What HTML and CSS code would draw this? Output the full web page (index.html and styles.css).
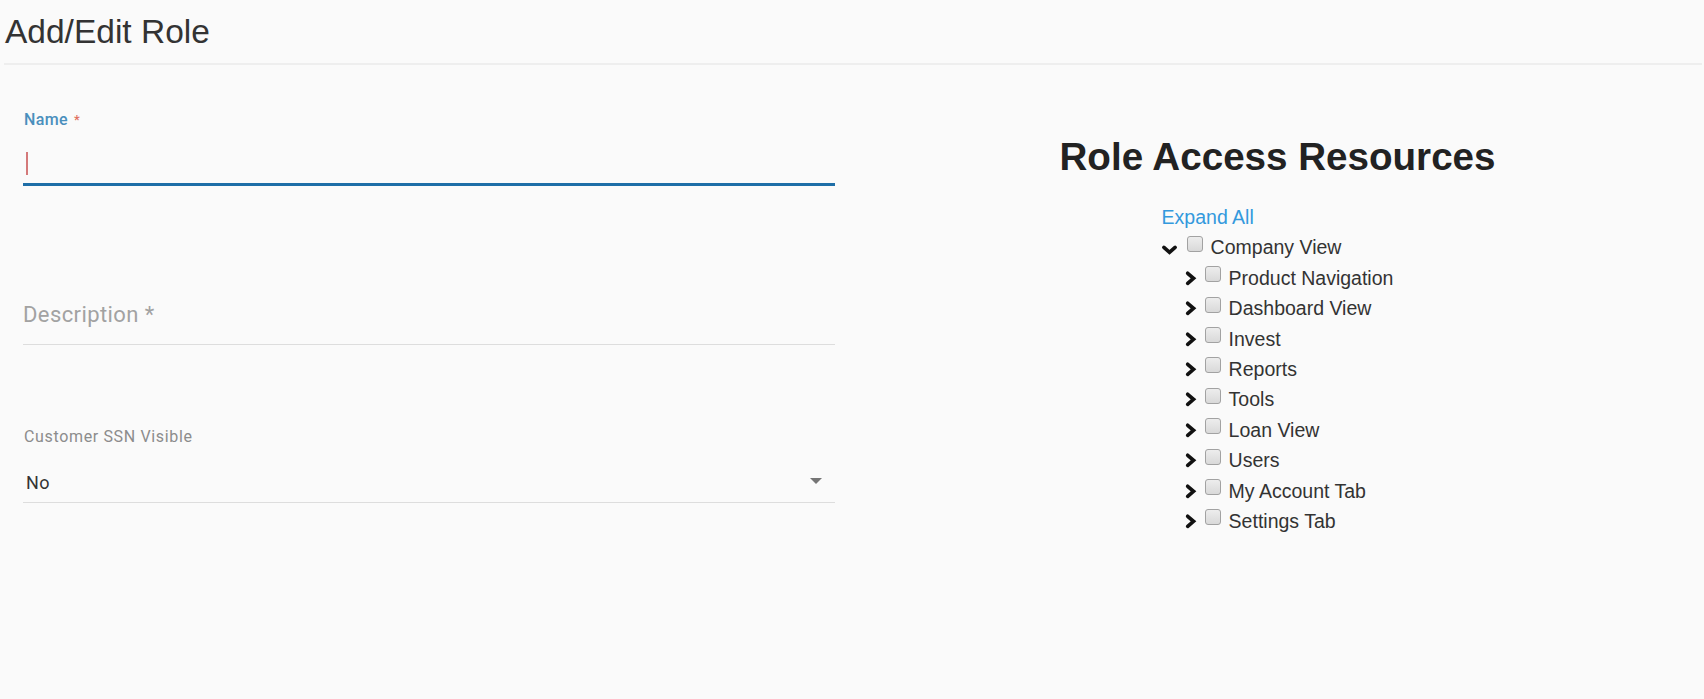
FILE: index.html
```html
<!DOCTYPE html>
<html lang="en">
<head>
<meta charset="utf-8">
<title>Add/Edit Role</title>
<link rel="stylesheet" href="styles.css">
</head>
<body>
<div class="page">
  <h1 class="title">Add/Edit Role</h1>
  <div class="content">
    <form class="form">
      <div class="field field-name">
        <label class="float-label">Name<span class="req">*</span></label>
        <div class="input input-focused"><span class="caret"></span></div>
      </div>
      <div class="field field-desc">
        <div class="input input-plain"><span class="placeholder">Description *</span></div>
      </div>
      <div class="field field-select">
        <div class="static-label">Customer SSN Visible</div>
        <div class="select"><span class="select-value">No</span><span class="select-arrow"></span></div>
      </div>
    </form>
    <section class="resources">
      <h2 class="res-title">Role Access Resources</h2>
      <div class="tree">
        <div class="row expand-row"><a class="expand-all">Expand All</a></div>
        <div class="row">
          <svg class="chev" width="25" height="30" viewBox="0 0 25 30"><path d="M1.9 15.4 L7.5 20.3 L13.1 15.4" /></svg>
          <span class="cb"></span><span class="txt">Company View</span>
        </div>
        <div class="children">
          <div class="row"><svg class="chev" width="25" height="30" viewBox="0 0 25 30"><path d="M7.7 10.3 L13.5 15.3 L7.7 20.3" /></svg><span class="cb"></span><span class="txt">Product Navigation</span></div>
          <div class="row"><svg class="chev" width="25" height="30" viewBox="0 0 25 30"><path d="M7.7 10.3 L13.5 15.3 L7.7 20.3" /></svg><span class="cb"></span><span class="txt">Dashboard View</span></div>
          <div class="row"><svg class="chev" width="25" height="30" viewBox="0 0 25 30"><path d="M7.7 10.3 L13.5 15.3 L7.7 20.3" /></svg><span class="cb"></span><span class="txt">Invest</span></div>
          <div class="row"><svg class="chev" width="25" height="30" viewBox="0 0 25 30"><path d="M7.7 10.3 L13.5 15.3 L7.7 20.3" /></svg><span class="cb"></span><span class="txt">Reports</span></div>
          <div class="row"><svg class="chev" width="25" height="30" viewBox="0 0 25 30"><path d="M7.7 10.3 L13.5 15.3 L7.7 20.3" /></svg><span class="cb"></span><span class="txt">Tools</span></div>
          <div class="row"><svg class="chev" width="25" height="30" viewBox="0 0 25 30"><path d="M7.7 10.3 L13.5 15.3 L7.7 20.3" /></svg><span class="cb"></span><span class="txt">Loan View</span></div>
          <div class="row"><svg class="chev" width="25" height="30" viewBox="0 0 25 30"><path d="M7.7 10.3 L13.5 15.3 L7.7 20.3" /></svg><span class="cb"></span><span class="txt">Users</span></div>
          <div class="row"><svg class="chev" width="25" height="30" viewBox="0 0 25 30"><path d="M7.7 10.3 L13.5 15.3 L7.7 20.3" /></svg><span class="cb"></span><span class="txt">My Account Tab</span></div>
          <div class="row"><svg class="chev" width="25" height="30" viewBox="0 0 25 30"><path d="M7.7 10.3 L13.5 15.3 L7.7 20.3" /></svg><span class="cb"></span><span class="txt">Settings Tab</span></div>
        </div>
      </div>
    </section>
  </div>
</div>
</body>
</html>
```

FILE: styles.css
```css
* { box-sizing: border-box; }

html, body {
  margin: 0;
  padding: 0;
  background: #fafafa;
}

body {
  font-family: "Liberation Sans", Arial, sans-serif;
  color: #333;
}

.page {
  padding: 0 2px 0 4px;
}

.title {
  margin: 0;
  padding: 10px 0 9px 1px;
  font-size: 33.5px;
  line-height: 44px;
  font-weight: 400;
  color: #333;
  border-bottom: 2px solid #eeeeee;
}

.content {
  display: grid;
  grid-template-columns: 1fr 1fr;
}

/* ---------- left form ---------- */
.form {
  padding: 45px 0 0 19px;
  font-family: Roboto, "Liberation Sans", sans-serif;
}

.field {
  width: 812px;
}

.float-label {
  display: block;
  font-size: 16px;
  line-height: 20px;
  font-weight: 500;
  letter-spacing: 0.35px;
  color: #4a8fbd;
  padding-left: 1px;
}

.req {
  margin-left: 6px;
  font-size: 13px;
  vertical-align: 1px;
  color: #e0705e;
}

.input-focused {
  height: 56px;
  padding: 22px 0 0 3px;
  border-bottom: 3px solid #1e6ea7;
}

.caret {
  display: block;
  width: 1.5px;
  height: 23px;
  background: #d4797a;
}

.field-desc {
  margin-top: 114px;
}

.input-plain {
  padding-bottom: 15px;
  border-bottom: 1px solid #dddddd;
}

.placeholder {
  display: block;
  font-size: 22px;
  line-height: 29px;
  letter-spacing: 0.4px;
  color: #a2a2a2;
}

.field-select {
  margin-top: 82px;
}

.static-label {
  font-size: 16px;
  line-height: 20px;
  letter-spacing: 0.65px;
  color: #8c8c8c;
  padding-left: 1px;
}

.select {
  display: flex;
  justify-content: space-between;
  align-items: flex-start;
  margin-top: 24px;
  padding: 0 13px 7px 3px;
  border-bottom: 1px solid #dddddd;
}

.select-value {
  font-size: 18px;
  line-height: 24px;
  letter-spacing: 0.3px;
  color: #333;
}

.select-arrow {
  width: 0;
  height: 0;
  margin-top: 7px;
  border-left: 6px solid transparent;
  border-right: 6px solid transparent;
  border-top: 6px solid #757575;
}

/* ---------- right resources ---------- */
.resources {
  text-align: center;
}

.res-title {
  margin: 70px 0 0;
  font-size: 38.6px;
  line-height: 44px;
  font-weight: 700;
  color: #222;
}

.tree {
  width: fit-content;
  margin: 23px auto 0;
  text-align: left;
  font-size: 19.5px;
}

.row {
  display: flex;
  align-items: flex-start;
  height: 30.4px;
  line-height: 30.4px;
  white-space: nowrap;
}

.expand-all {
  color: #3399dd;
  cursor: pointer;
}

.chev {
  flex: none;
  overflow: visible;
}

.chev path {
  fill: none;
  stroke: #111;
  stroke-width: 3.7;
  stroke-linecap: round;
  stroke-linejoin: miter;
}

.cb {
  flex: none;
  width: 16px;
  height: 16px;
  margin-top: 3.5px;
  border: 1px solid #a2a2a2;
  border-radius: 3px;
  background: linear-gradient(#ededed, #d9d9d9);
}

.txt {
  margin-left: 8px;
  color: #333;
}

.children {
  padding-left: 18px;
}
```
